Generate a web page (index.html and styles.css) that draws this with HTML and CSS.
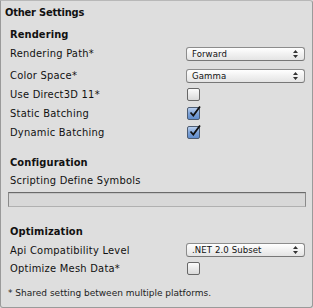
FILE: index.html
```html
<!DOCTYPE html>
<html>
<head>
<meta charset="utf-8">
<link rel="stylesheet" href="styles.css">
</head>
<body>
<div class="panel">
  <div class="title">Other Settings</div>

  <div class="head head-first">Rendering</div>
  <div class="row row-gap">
    <span class="label">Rendering Path*</span>
    <div class="popup"><span class="popup-text">Forward</span><span class="arrows"><svg width="5" height="8" viewBox="0 0 5 8"><path d="M2.5 0 L5 3 L0 3 Z M0 5 L5 5 L2.5 8 Z" fill="#333"/></svg></span></div>
  </div>
  <div class="row">
    <span class="label">Color Space*</span>
    <div class="popup"><span class="popup-text">Gamma</span><span class="arrows"><svg width="5" height="8" viewBox="0 0 5 8"><path d="M2.5 0 L5 3 L0 3 Z M0 5 L5 5 L2.5 8 Z" fill="#333"/></svg></span></div>
  </div>
  <div class="row">
    <span class="label">Use Direct3D 11*</span>
    <span class="check"></span>
  </div>
  <div class="row">
    <span class="label">Static Batching</span>
    <span class="check checked"><svg class="tick" width="14" height="14" viewBox="0 0 14 14"><path d="M2.5 7.5 L5.3 10.5 L12 1.5" fill="none" stroke="#111" stroke-width="1.8"/></svg></span>
  </div>
  <div class="row">
    <span class="label">Dynamic Batching</span>
    <span class="check checked"><svg class="tick" width="14" height="14" viewBox="0 0 14 14"><path d="M2.5 7.5 L5.3 10.5 L12 1.5" fill="none" stroke="#111" stroke-width="1.8"/></svg></span>
  </div>

  <div class="head head-config">Configuration</div>
  <div class="label-line">Scripting Define Symbols</div>
  <div class="field"></div>

  <div class="head head-opt">Optimization</div>
  <div class="row row-short">
    <span class="label">Api Compatibility Level</span>
    <div class="popup"><span class="popup-text">.NET 2.0 Subset</span><span class="arrows"><svg width="5" height="8" viewBox="0 0 5 8"><path d="M2.5 0 L5 3 L0 3 Z M0 5 L5 5 L2.5 8 Z" fill="#333"/></svg></span></div>
  </div>
  <div class="row">
    <span class="label">Optimize Mesh Data*</span>
    <span class="check"></span>
  </div>

  <div class="footer">* Shared setting between multiple platforms.</div>
</div>
</body>
</html>
```

FILE: styles.css
```css
html, body {
  margin: 0;
  padding: 0;
  background: #dedede;
}

body {
  font-family: "DejaVu Sans Condensed", "DejaVu Sans", "Liberation Sans", sans-serif;
  font-stretch: condensed;
  font-size: 11px;
  letter-spacing: 0.25px;
  color: #111;
}

.panel {
  box-sizing: border-box;
  width: 313px;
  height: 308px;
  background: #dedede;
  border: 1px solid #9a9a9a;
  border-top-color: #b8b8b8;
  border-radius: 0 3px 3px 3px;
  padding: 5px 0 0 0;
}

.title {
  font-weight: bold;
  line-height: 14px;
  padding-left: 4px;
  letter-spacing: -0.2px;
}

.head {
  font-weight: bold;
  line-height: 19px;
  padding-left: 9px;
  letter-spacing: 0.1px;
}

.head-first {
  margin-top: 5px;
}

.head-config {
  margin-top: 12px;
  line-height: 18px;
}

.head-opt {
  margin-top: 15px;
  line-height: 19px;
}

.row {
  display: flex;
  align-items: center;
  height: 19px;
  padding-left: 9px;
}

.row-gap {
  margin-bottom: 3px;
}

.row-short {
  height: 18px;
}

.label {
  width: 176px;
  flex: none;
}

.label-line {
  line-height: 18px;
  padding-left: 9px;
}

.popup {
  box-sizing: border-box;
  width: 119px;
  height: 14px;
  display: flex;
  align-items: center;
  justify-content: space-between;
  padding: 0 6px 0 5px;
  border: 1px solid #8c8c8c;
  border-bottom-color: #777;
  border-radius: 3px;
  background: linear-gradient(#ffffff, #f1f1f1 50%, #e4e4e4);
  font-size: 9.5px;
  letter-spacing: 0.1px;
  line-height: 12px;
}

.arrows {
  display: flex;
  align-items: center;
}

.check {
  position: relative;
  box-sizing: border-box;
  width: 13px;
  height: 13px;
  margin-left: 1px;
  border: 1px solid #676767;
  border-radius: 2px;
  background: linear-gradient(#fbfbfb, #d9d9d9);
}

.check.checked {
  background: linear-gradient(#b9cfee, #7ea3d8 50%, #5f8ccc);
  border-color: #4d5c72;
}

.tick {
  position: absolute;
  left: 0;
  top: -3px;
}

.field {
  box-sizing: border-box;
  margin: 2px 0 0 7px;
  width: 298px;
  height: 15px;
  background: #d8d8d8;
  border: 1px solid #8a8a8a;
  border-top-color: #6a6a6a;
  border-bottom-color: #b0b0b0;
  box-shadow: inset 0 1px 0 #c4c4c4;
}

.footer {
  margin-top: 9px;
  padding-left: 7px;
  font-family: "DejaVu Sans", "Liberation Sans", sans-serif;
  font-stretch: normal;
  font-size: 9px;
  letter-spacing: 0;
  line-height: 12px;
  color: #222;
}
```
